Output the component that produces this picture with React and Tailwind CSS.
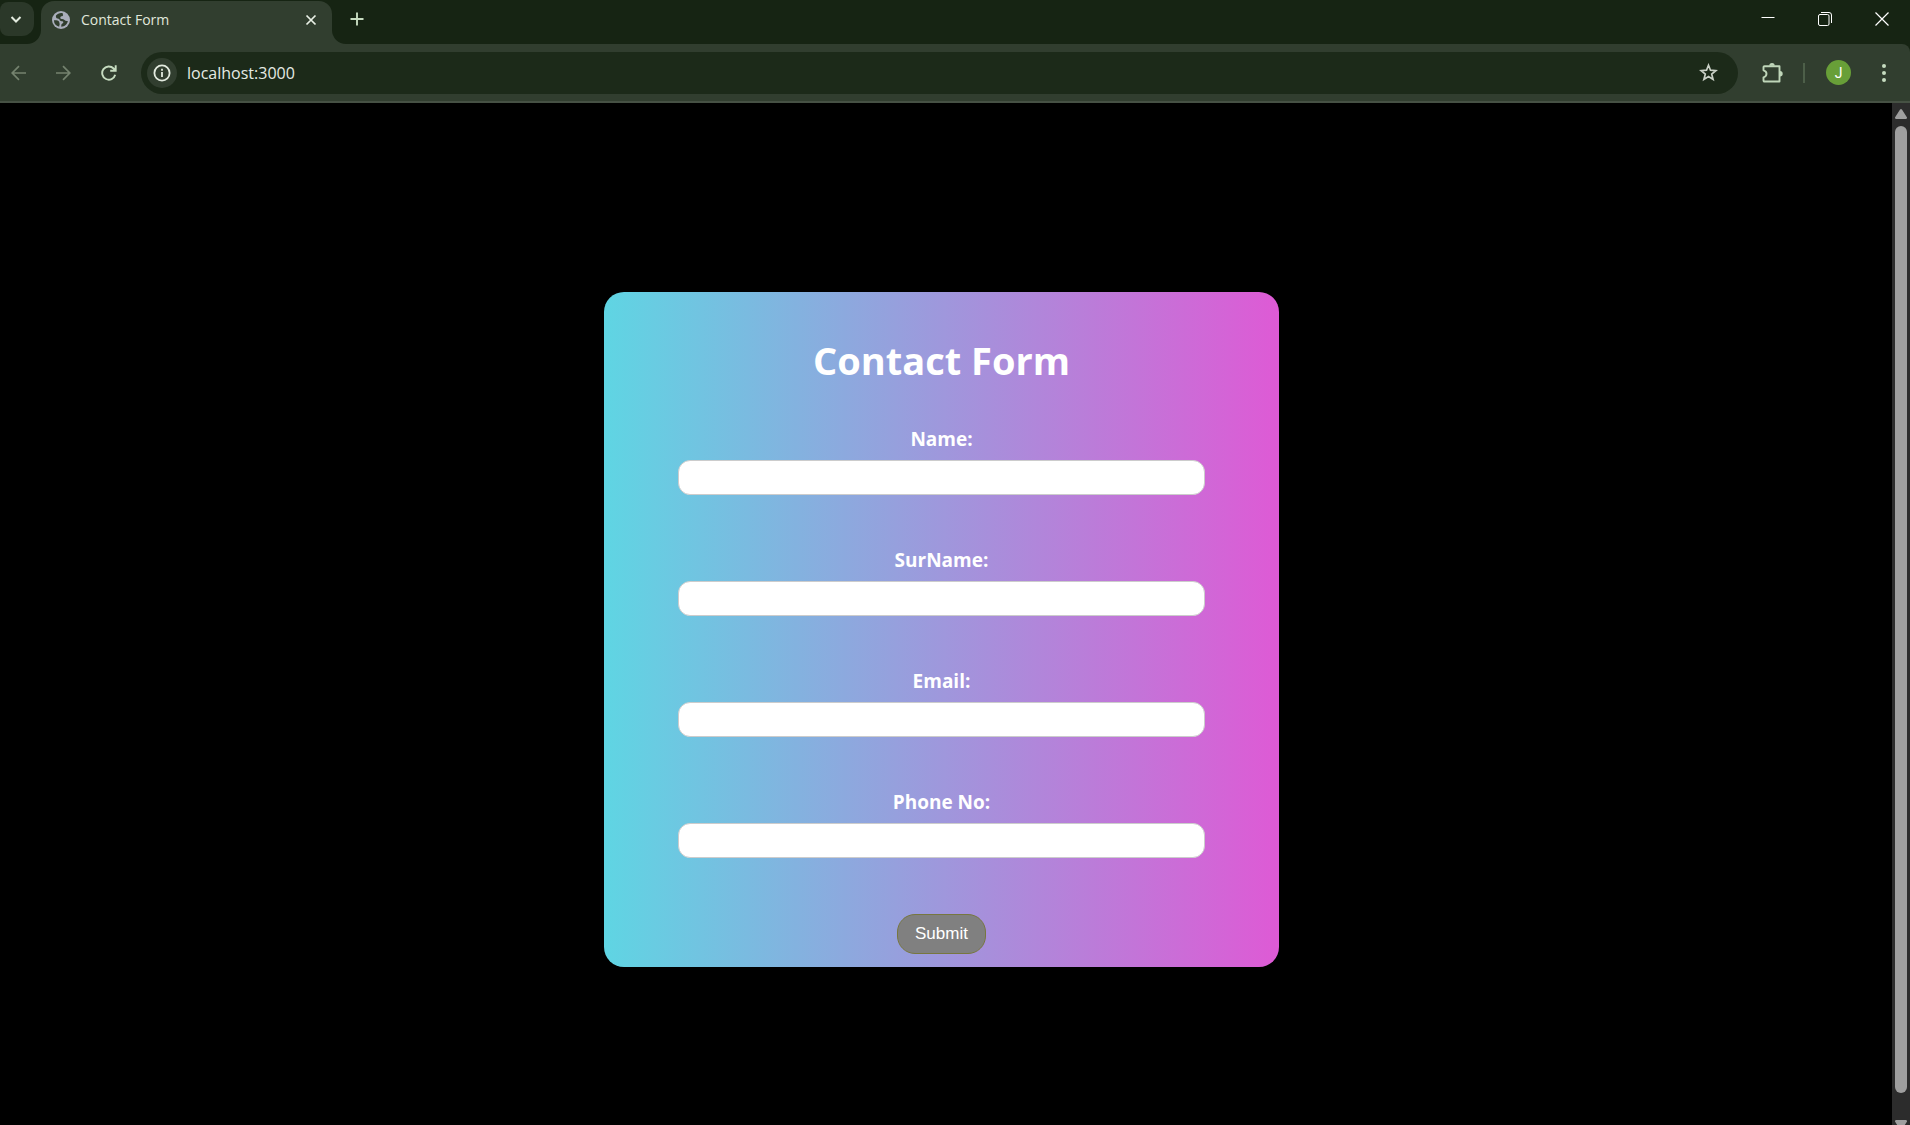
import React from "react";

const FIELDS = [
  { id: "name", label: "Name:", type: "text" },
  { id: "surname", label: "SurName:", type: "text" },
  { id: "email", label: "Email:", type: "email" },
  { id: "phone", label: "Phone No:", type: "tel" },
];

function GlobeIcon() {
  return (
    <svg width="18" height="18" viewBox="0 0 18 18" aria-hidden="true">
      <circle cx="9" cy="9" r="9" fill="#a9adba" />
      <path
        d="M10.800 2.200C8 1.600 5.600 2.600 4 4.600c-.4 1.500.2 2.800 1.600 3 1.300.1 1.900.5 2.200 1.600.5 1 1.600.900 2.600 1 1 .2 1.200 1.200.6 1.900-.8.8-1.700 1-1.700 2v1.600c3.400-.2 6-2.500 6.500-5.700-1.500.3-2.600-.1-3.300-1-.7-.8-1.800-1-3-1-.9 0-1.300-.6-1.200-1.400.1-.9.9-1.200 1.700-1.300.9-.2 1.300-.9 1-1.700-.2-.6-.4-.9-.2-1.400z"
        fill="#313e2f"
      />
      <path
        d="M1.900 9.200h2.500c1.700 0 2.900 1 3 2.600.1.800.4 1.200.2 2-.2.700-.5 1-.4 1.900A7 7 0 0 1 1.900 9.200z"
        fill="#313e2f"
      />
    </svg>
  );
}

function TabStrip() {
  return (
    <div className="flex h-11 bg-[#313e2f]">
      <div className="w-[41px] shrink-0 rounded-br-[14px] bg-[#162413] pt-0.5">
        <button
          type="button"
          aria-label="Search tabs"
          className="flex h-[34px] w-[34px] items-center justify-end rounded-xl rounded-l-lg bg-[#2b3829] pr-3"
        >
          <svg width="12" height="12" viewBox="0 0 12 12" fill="none" stroke="#e3ebdf" strokeWidth="2" aria-hidden="true">
            <path d="M1.500 4 6 8.500 10.500 4" />
          </svg>
        </button>
      </div>
      <div className="w-[291px] shrink-0 bg-gradient-to-b from-[#162413] from-50% to-[#313e2f] to-50% pt-px">
        <div className="flex h-full items-center gap-[11px] rounded-t-[13px] bg-[#313e2f] pr-[15px] pb-1.5 pl-[11px]">
          <GlobeIcon />
          <span className="flex-1 text-sm text-[#e0e8dc]">Contact Form</span>
          <button type="button" aria-label="Close tab">
            <svg width="12" height="12" viewBox="0 0 12 12" fill="none" stroke="#e9f0e6" strokeWidth="1.700" aria-hidden="true">
              <path d="M1.500 1.500l9 9M10.500 1.500l-9 9" />
            </svg>
          </button>
        </div>
      </div>
      <div className="flex flex-1 items-center justify-between rounded-bl-[14px] bg-[#162413] pr-[21px] pb-[7px] pl-[18px]">
        <button type="button" aria-label="New tab">
          <svg width="14" height="14" viewBox="0 0 14 14" fill="none" stroke="#c6dcc0" strokeWidth="1.900" aria-hidden="true">
            <path d="M7 .5v13M.5 7h13" />
          </svg>
        </button>
        <div className="flex items-center gap-[43px]">
          <button type="button" aria-label="Minimize">
            <svg width="14" height="14" viewBox="0 0 14 14" aria-hidden="true">
              <path d="M.5 5.500h13" stroke="#fff" fill="none" />
            </svg>
          </button>
          <button type="button" aria-label="Restore">
            <svg width="14" height="14" viewBox="0 0 14 14" fill="none" stroke="#fff" aria-hidden="true">
              <rect x=".5" y="2.500" width="10.500" height="11" rx="1.500" />
              <path d="M3 .5h8a2.500 2.500 0 0 1 2.500 2.500v8" />
            </svg>
          </button>
          <button type="button" aria-label="Close window">
            <svg width="14" height="14" viewBox="0 0 14 14" fill="none" stroke="#fff" strokeWidth="1.200" aria-hidden="true">
              <path d="M.5 .5l13 13M13.500 .5l-13 13" />
            </svg>
          </button>
        </div>
      </div>
    </div>
  );
}

function Toolbar() {
  return (
    <div className="bg-[#162413]">
      <div className="flex h-[59px] items-center rounded-tr-lg border-b-2 border-[#465144] bg-[#313e2f] pr-6 pl-[11px]">
        <div className="flex w-[130px] shrink-0 items-center gap-[29px]">
          <button type="button" aria-label="Back">
            <svg width="16" height="16" viewBox="0 0 16 16" fill="none" stroke="#75836f" strokeWidth="1.700" aria-hidden="true">
              <path d="M15 8H1.500M8 1.200 1.200 8 8 14.800" />
            </svg>
          </button>
          <button type="button" aria-label="Forward">
            <svg width="16" height="16" viewBox="0 0 16 16" fill="none" stroke="#75836f" strokeWidth="1.700" aria-hidden="true">
              <path d="M0 8h13.500M7 1.200 13.800 8 7 14.800" />
            </svg>
          </button>
          <button type="button" aria-label="Reload">
            <svg width="16" height="16" viewBox="0 0 16 16" fill="none" stroke="#c6dcc0" strokeWidth="1.900" aria-hidden="true">
              <path d="M14.200 9.700A6.600 6.600 0 1 1 12.600 3.500L14 5M14.700 .3v5.400H9.200" />
            </svg>
          </button>
        </div>
        <div className="flex h-[42px] flex-1 items-center rounded-full bg-[#1c2a19] pr-5 pl-1.5">
          <button
            type="button"
            aria-label="Site information"
            className="flex size-[30px] items-center justify-center rounded-full bg-[#313e2f]"
          >
            <svg width="18" height="18" viewBox="0 0 18 18" fill="none" stroke="#e3ebdf" strokeWidth="1.800" aria-hidden="true">
              <circle cx="9" cy="9" r="7.600" />
              <path d="M9 8v5M9 4.700v2" />
            </svg>
          </button>
          <input
            type="text"
            aria-label="Address"
            defaultValue="localhost:3000"
            className="ml-2.5 min-w-0 flex-1 bg-transparent text-base text-[#e6ebe4] outline-none"
          />
          <button type="button" aria-label="Bookmark this tab">
            <svg width="19" height="19" viewBox="0 0 19 19" fill="none" stroke="#c9d0c6" strokeWidth="1.700" aria-hidden="true">
              <path d="M9.500 2.200l2 5 5.400.4-4.200 3.500 1.400 5.400-4.600-2.900-4.600 2.900 1.400-5.400L2.100 7.600l5.400-.4z" />
            </svg>
          </button>
        </div>
        <div className="ml-6 flex items-center">
          <button type="button" aria-label="Extensions">
            <svg width="21" height="22" viewBox="0 0 21 22" fill="none" stroke="#bfd6b9" strokeWidth="1.900" strokeLinejoin="round" aria-hidden="true">
              <path d="M2.500 4.200h15v15.300h-15A1 1 0 0 1 1.500 18.500V15.300c4-1 4-6 0-7V5.200a1 1 0 0 1 1-1z" />
              <path d="M7.300 3.800a2.700 2.700 0 0 1 5.400 0zM18 9a2.700 2.700 0 0 1 0 5.400z" fill="#bfd6b9" stroke="none" />
            </svg>
          </button>
          <span className="ml-5 h-5 w-0.5 bg-[#4d5f49]" />
          <button
            type="button"
            aria-label="Profile"
            className="ml-[21px] flex size-[25px] items-center justify-center rounded-full bg-[#689f38] font-[Roboto,sans-serif] text-sm leading-none text-white"
          >
            J
          </button>
          <button type="button" aria-label="Menu" className="ml-[31px]">
            <svg width="4" height="18" viewBox="0 0 4 18" fill="#c6dcc0" aria-hidden="true">
              <circle cx="2" cy="2" r="2" />
              <circle cx="2" cy="9" r="2" />
              <circle cx="2" cy="16" r="2" />
            </svg>
          </button>
        </div>
      </div>
    </div>
  );
}

function Scrollbar() {
  return (
    <div className="flex w-[18px] shrink-0 flex-col items-center bg-[#2c2c2c] pt-1.5" aria-hidden="true">
      <svg width="12" height="10" viewBox="0 0 12 10" fill="#9f9f9f" className="shrink-0">
        <path d="M4.900.8a1.400 1.400 0 0 1 2.200 0L11.700 8A1.200 1.200 0 0 1 10.700 10H1.300A1.200 1.200 0 0 1 .3 8z" />
      </svg>
      <div className="mt-[7px] w-3 flex-1 rounded-full bg-[#9f9f9f]" />
      <svg width="12" height="5" viewBox="0 0 12 5" fill="#9f9f9f" className="mt-[27px] shrink-0">
        <path d="M1.300 0h9.400a1.200 1.200 0 0 1 1 2L9.800 5H2.200L.3 2a1.200 1.200 0 0 1 1-2z" />
      </svg>
    </div>
  );
}

function ContactForm() {
  return (
    <form
      onSubmit={(e) => e.preventDefault()}
      className="flex w-full max-w-[675px] flex-col items-center rounded-[20px] bg-[linear-gradient(to_right,#5fd5e3,#de5ad5)] px-[74px] pt-10 pb-[13px] text-white"
    >
      <h1 className="text-[38px] leading-14 font-bold">Contact Form</h1>
      <div className="mt-[38px] flex w-full flex-col gap-[52px]">
        {FIELDS.map((f) => (
          <div key={f.id} className="flex flex-col items-center gap-2">
            <label htmlFor={f.id} className="text-[19px] leading-[26px] font-bold">
              {f.label}
            </label>
            <input
              id={f.id}
              name={f.id}
              type={f.type}
              className="h-[35px] w-full rounded-xl border border-[#ccc] bg-white px-3 text-base text-black"
            />
          </div>
        ))}
      </div>
      <button
        type="submit"
        className="mt-14 h-10 rounded-[18px] border border-[#77773f] bg-[#808080] px-[17px] font-['Liberation_Sans',Arial,sans-serif] text-[17px] text-white"
      >
        Submit
      </button>
    </form>
  );
}

export default function App() {
  return (
    <div className="flex h-screen flex-col overflow-hidden bg-black font-['Open_Sans','Noto_Sans',sans-serif]">
      <header>
        <TabStrip />
        <Toolbar />
      </header>
      <div className="flex min-h-0 flex-1">
        <main className="flex flex-1 items-start justify-center overflow-hidden pt-[189px] pr-[9px]">
          <ContactForm />
        </main>
        <Scrollbar />
      </div>
    </div>
  );
}
